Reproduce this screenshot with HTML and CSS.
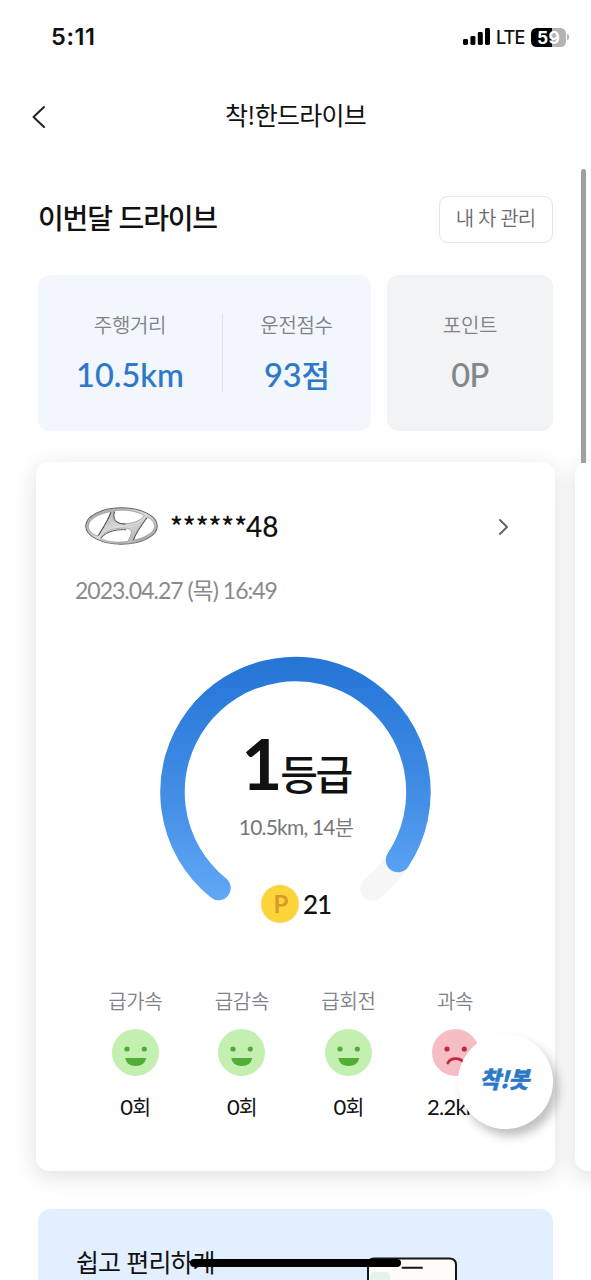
FILE: index.html
```html
<!DOCTYPE html>
<html lang="ko">
<head>
<meta charset="utf-8">
<meta name="viewport" content="width=device-width, initial-scale=1">
<title>착!한드라이브</title>
<link rel="stylesheet" href="styles.css">
</head>
<body>
<div class="screen">
  <header class="status">
    <span class="clock">5:11</span>
    <div class="status-right">
      <svg class="signal" width="27" height="18" viewBox="0 0 27 18"><rect x="0" y="11" width="5" height="6" rx="1.4"/><rect x="7.4" y="8" width="5" height="9" rx="1.4"/><rect x="14.8" y="4" width="5" height="13" rx="1.4"/><rect x="22" y="0" width="5" height="17" rx="1.4"/></svg>
      <span class="lte">LTE</span>
      <div class="battery"><span>59</span></div>
      <i class="battery-tip"></i>
    </div>
  </header>

  <nav class="topbar">
    <svg class="back" width="16" height="24" viewBox="0 0 16 24"><path d="M13 2 L2.5 12 L13 22"/></svg>
    <h1 class="title">착!한드라이브</h1>
  </nav>

  <main class="content">
    <div class="month">
      <h2 class="month-title">이번달 드라이브</h2>
      <button class="manage">내 차 관리</button>
    </div>

    <section class="stats">
      <div class="stat-blue">
        <div class="stat stat-distance"><span class="label">주행거리</span><b class="value value-km">10.5km</b></div>
        <div class="stat stat-score"><span class="label">운전점수</span><b class="value">93<span class="unit">점</span></b></div>
      </div>
      <div class="stat stat-gray"><span class="label">포인트</span><b class="value value-gray">0P</b></div>
    </section>

    <div class="carousel">
      <article class="card">
        <div class="car">
          <svg class="logo" width="73" height="38" viewBox="0 0 218 112">
            <defs><linearGradient id="chrome" x1="0" y1="0" x2="1" y2="1"><stop offset="0" stop-color="#999"/><stop offset=".5" stop-color="#dcdcde"/><stop offset="1" stop-color="#9b9b9d"/></linearGradient></defs>
            <ellipse cx="109" cy="56" rx="107" ry="54.5" fill="url(#chrome)" stroke="#666" stroke-width="3"/>
            <path class="hole" d="M77 13 C38 19 10 38 10 57 C10 69 20 80 38 86 C44 72 64 50 77 13Z"/>
            <path class="hole" d="M88 10 C125 6 155 12 177 24 C166 44 134 50 112 49 C86 49 78 31 88 10Z"/>
            <path class="hole" d="M46 93 C60 64 105 61 124 63 C147 65 138 84 128 102 C94 107 65 103 46 93Z"/>
            <path class="hole" d="M185 29 C202 37 208 47 208 57 C208 76 176 93 143 99 C152 74 166 56 185 29Z"/>
            <path class="edge" d="M88 14 C80 38 98 52 120 50 M49 91 C66 68 105 66 122 67 M77 16 C66 46 50 66 41 84 M184 33 C166 58 152 78 145 97"/>
          </svg>
          <span class="plate"><span class="mask">******</span>48</span>
          <svg class="next" width="12" height="18" viewBox="0 0 12 18"><path d="M2 3 L9 10 L2 17"/></svg>
        </div>
        <p class="date">2023.04.27 (목) 16:49</p>

        <div class="gauge">
          <svg class="ring" width="272" height="250" viewBox="0 0 272 250">
            <defs><linearGradient id="arc" gradientUnits="userSpaceOnUse" x1="0" y1="0" x2="0" y2="245"><stop offset="0" stop-color="#2575d5"/><stop offset=".15" stop-color="#2a7bdb"/><stop offset=".6" stop-color="#448fe6"/><stop offset="1" stop-color="#62a8f6"/></linearGradient></defs>
            <path class="track" d="M238.5 204 A123 123 0 0 1 212.5 232.5"/>
            <path class="progress" d="M58.5 232 A123 123 0 1 1 238 204"/>
          </svg>
          <div class="gauge-text">
            <div class="grade"><b>1</b><span>등급</span></div>
            <div class="trip">10.5km, 14<span>분</span></div>
            <div class="points"><i class="coin">P</i><span>21</span></div>
          </div>
        </div>

        <ul class="events">
          <li><span class="label">급가속</span><svg class="face" viewBox="0 0 47 47"><circle class="good" cx="23.5" cy="23.5" r="23.5"/><circle class="good-ink" cx="15" cy="20" r="2.6"/><circle class="good-ink" cx="32.3" cy="20" r="2.6"/><path class="good-ink" d="M13.3 29 H34.2 C33.4 34.2 29.5 37 23.7 37 C18 37 14.1 34.2 13.3 29Z"/></svg><span class="count">0<em>회</em></span></li>
          <li><span class="label">급감속</span><svg class="face" viewBox="0 0 47 47"><circle class="good" cx="23.5" cy="23.5" r="23.5"/><circle class="good-ink" cx="15" cy="20" r="2.6"/><circle class="good-ink" cx="32.3" cy="20" r="2.6"/><path class="good-ink" d="M13.3 29 H34.2 C33.4 34.2 29.5 37 23.7 37 C18 37 14.1 34.2 13.3 29Z"/></svg><span class="count">0<em>회</em></span></li>
          <li><span class="label">급회전</span><svg class="face" viewBox="0 0 47 47"><circle class="good" cx="23.5" cy="23.5" r="23.5"/><circle class="good-ink" cx="15" cy="20" r="2.6"/><circle class="good-ink" cx="32.3" cy="20" r="2.6"/><path class="good-ink" d="M13.3 29 H34.2 C33.4 34.2 29.5 37 23.7 37 C18 37 14.1 34.2 13.3 29Z"/></svg><span class="count">0<em>회</em></span></li>
          <li><span class="label">과속</span><svg class="face" viewBox="0 0 47 47"><circle class="bad" cx="23.5" cy="23.5" r="23.5"/><circle class="bad-ink" cx="15" cy="20" r="2.6"/><circle class="bad-ink" cx="32.3" cy="20" r="2.6"/><path class="frown" d="M15.8 34 C18.5 28.2 29 28.2 31.7 34"/></svg><span class="count">2.2km</span></li>
        </ul>
      </article>
      <article class="card card-next"></article>
    </div>

    <section class="banner">
      <p class="banner-text">쉽고 편리하게</p>
      <svg class="phone-art" width="92" height="24" viewBox="0 0 92 24"><path class="phone" d="M1 40 V8 Q1 1.5 7 1.5 H82.5 Q89 1.5 89 8 V40"/><rect x="3" y="15" width="20" height="20" rx="4" fill="#e3f5eb"/><path d="M35.5 10.8 H55" stroke="#151515" stroke-width="2" stroke-linecap="round"/></svg>
    </section>
  </main>

  <i class="scrollbar"></i>
  <button class="bot">착!봇</button>
  <i class="home-indicator"></i>
</div>
</body>
</html>
```
FILE: styles.css
```css
* { box-sizing: border-box; margin: 0; padding: 0; }
body { background: #fff; font-family: Lato, "Noto Sans CJK KR", sans-serif; color: #111; }
button { font: inherit; border: 0; }
svg { display: block; flex: none; }
i, em { font-style: normal; }

.screen { position: relative; width: 591px; height: 1280px; overflow: hidden; background: #fefefe; }

.status { display: flex; justify-content: space-between; align-items: center; height: 74px; padding: 0 22px 0 51px; font-family: Inter, sans-serif; }
.clock { padding-bottom: 1px; font-size: 23.5px; font-weight: 600; letter-spacing: .6px; }
.status-right { display: flex; align-items: center; }
.signal { fill: #000; }
.lte { margin-left: 6px; width: 35px; font-size: 18px; font-weight: 500; letter-spacing: -.9px; white-space: nowrap; }
.battery { width: 35px; height: 19px; border-radius: 5.5px; background: linear-gradient(90deg, #000 60%, #b3b3b3 60%); color: #fff; font-size: 17.5px; font-weight: 700; line-height: 19px; text-align: center; letter-spacing: .1px; }
.battery-tip { width: 2px; height: 6px; margin-left: 1px; border-radius: 0 2px 2px 0; background: #b3b3b3; }

.topbar { display: grid; grid-template-columns: 60px 1fr 60px; align-items: center; height: 84px; }
.back { margin: 2px 0 0 31px; fill: none; stroke: #222; stroke-width: 2; stroke-linecap: round; stroke-linejoin: round; }
.title { text-align: center; padding: 0 0 4px; font-family: "Noto Sans CJK KR", sans-serif; font-size: 25px; font-weight: 400; line-height: 34px; letter-spacing: -.75px; }

.content { padding: 38px 38px 0; }
.month { display: flex; justify-content: space-between; align-items: center; height: 47px; }
.month-title { padding-bottom: 6px; font-family: "Noto Sans CJK KR", sans-serif; font-size: 28px; font-weight: 500; line-height: 36px; letter-spacing: -1.15px; }
.manage { width: 114px; height: 47px; padding: 0 1px 3px 0; border: 1.5px solid #e6e6e6; border-radius: 9px; background: #fff; color: #6b6b6b; font-family: "Noto Sans CJK KR", sans-serif; font-size: 20px; font-weight: 350; letter-spacing: -.85px; line-height: 40px; }

.stats { display: flex; gap: 16px; margin-top: 32px; height: 156px; }
.stat-blue { display: flex; width: 333px; border-radius: 12px; background: #f2f7fe; }
.stat { display: flex; flex-direction: column; align-items: center; padding-top: 36px; }
.stat-distance { position: relative; width: 184px; }
.stat-distance::after { content: ""; position: absolute; right: -1px; top: 39px; width: 1px; height: 78px; background: #dbe2ee; }
.stat-score { width: 149px; }
.stat-gray { width: 166px; border-radius: 12px; background: #f2f3f5; }
.label { font-family: "Noto Sans CJK KR", sans-serif; font-size: 20px; font-weight: 350; line-height: 28px; color: #808287; letter-spacing: -.3px; }
.value { margin-top: 13.5px; font-size: 32.5px; font-weight: 500; line-height: 44px; color: #2e78c7; -webkit-text-stroke: .15px currentColor; white-space: nowrap; }
.unit { font-size: 31px; line-height: 1; letter-spacing: -1px; -webkit-text-stroke: 0; }
.value-gray { color: #85868a; letter-spacing: -.4px; }

.carousel { display: flex; gap: 20px; margin: 31px -38px 0 -2px; }
.card { flex: none; width: 519px; height: 709px; border-radius: 13px; background: #fff; box-shadow: 0 5px 22px rgba(0,0,0,.12); }
.car { display: flex; align-items: center; height: 46px; margin-top: 41px; padding: 0 45px 0 49px; }
.plate { display: flex; margin-left: 12px; font-size: 28px; font-weight: 500; line-height: 46px; }
.mask { width: 76px; font-family: "Noto Sans CJK KR", sans-serif; font-size: 26.5px; font-weight: 500; letter-spacing: 0; }
.next { margin-left: auto; fill: none; stroke: #666; stroke-width: 2; stroke-linecap: round; stroke-linejoin: round; }
.date { margin: 24px 0 0 39px; font-size: 23px; line-height: 34px; color: #8a8a8a; letter-spacing: -1px; white-space: nowrap; }

.gauge { display: grid; justify-items: center; width: 272px; margin: 49px 0 0 124px; }
.ring, .gauge-text { grid-area: 1 / 1; }
.ring path { fill: none; stroke-width: 24.5; stroke-linecap: round; }
.ring .track { stroke: #f6f6f6; }
.ring .progress { stroke: url(#arc); }
.gauge-text { display: flex; flex-direction: column; align-items: center; padding-top: 62px; height: 270px; }
.grade { display: flex; align-items: baseline; height: 90px; line-height: 90px; }
.grade b { font-size: 71px; font-weight: 700; letter-spacing: -2px; }
.grade span { font-family: "Noto Sans CJK KR", sans-serif; font-size: 41px; font-weight: 500; line-height: 50px; letter-spacing: -2.5px; }
.trip { margin: 3px 0 0; font-size: 21px; line-height: 32px; color: #75777b; letter-spacing: -.8px; white-space: nowrap; }
.trip span { font-weight: 350; }
.points { display: flex; align-items: center; gap: 4px; margin-top: 42px; font-size: 26px; line-height: 38px; font-weight: 500; letter-spacing: -1px; }
.coin { width: 38px; height: 38px; border-radius: 50%; background: #fdd43a; color: #d99a2b; text-align: center; font-size: 24px; font-weight: 700; line-height: 38px; padding-left: 1px; }

.events { display: flex; list-style: none; margin: 61px 0 0 46px; }
.events li { display: flex; flex-direction: column; align-items: center; width: 106.6px; }
.face { width: 47px; height: 47px; margin-top: 14px; }
.good { fill: #c3efb1; }
.good-ink { fill: #50ae35; }
.bad { fill: #f6bdc5; }
.bad-ink { fill: #bd2a45; }
.frown { fill: none; stroke: #bd2a45; stroke-width: 2.8; stroke-linecap: round; }
.count { margin-top: 17px; font-size: 22px; line-height: 28px; letter-spacing: -.8px; color: #111; }
.count em { font-size: 20.5px; }
.hole { fill: #fff; stroke: #888; stroke-width: 2; }
.edge { fill: none; stroke: #333; stroke-width: 2.5; stroke-linecap: round; }

.banner { display: flex; align-items: flex-start; margin-top: 38px; height: 90px; padding: 35px 0 0 38px; border-radius: 13px 13px 0 0; background: #e2effe; }
.banner-text { width: 291px; font-family: "Noto Sans CJK KR", sans-serif; font-size: 25px; line-height: 34px; letter-spacing: -.9px; }
.phone-art { margin-top: 13px; }
.phone { fill: #fffcf8; stroke: #151515; stroke-width: 2; }

.scrollbar { position: absolute; left: 581px; top: 169px; width: 5px; height: 294px; border-radius: 3px 3px 0 0; background: #a0a0a0; }
.bot { position: absolute; left: 458px; top: 1034px; width: 95px; height: 95px; padding: 0 3px 7px 0; border-radius: 50%; background: #fff; color: #2b78c8; box-shadow: 5px 7px 10px rgba(60,45,50,.3); font-family: "Noto Sans CJK KR", sans-serif; font-size: 23px; font-weight: 900; font-style: italic; letter-spacing: -.7px; line-height: 80px; -webkit-text-stroke: .4px currentColor; }
.home-indicator { position: absolute; left: 190px; top: 1259px; width: 211px; height: 8px; border-radius: 4px; background: #000; }
```
